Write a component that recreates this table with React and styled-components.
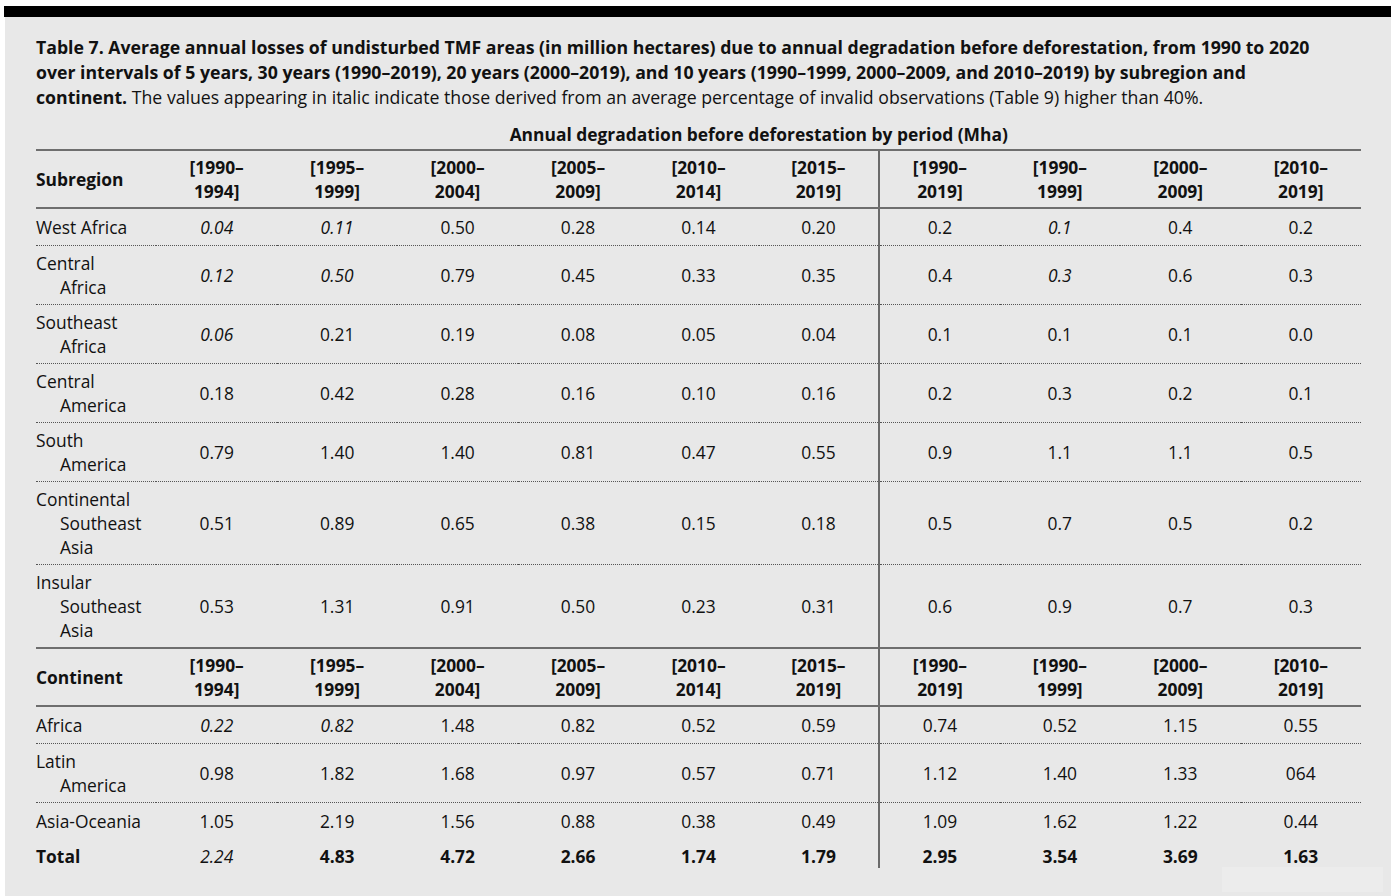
import React from "react";
import styled, { createGlobalStyle } from "styled-components";

const Global = createGlobalStyle`
  html, body { margin: 0; padding: 0; background: #ffffff; }
  body { font-family: "Open Sans", "Noto Sans", sans-serif; color: #111; }
`;

const Page = styled.div`
  padding: 6px 4px 3px 4px;
  width: 1387px;
`;

const TopBar = styled.div`
  height: 11px;
  background: #000;
`;

const Panel = styled.section`
  position: relative;
  background: #e8e8e8;
  margin-left: 1px;
  padding: 18px 30px 29px 31px;
`;

const Caption = styled.p`
  margin: 0 0 10px 0;
  font-size: 17.7px;
  line-height: 25px;
  letter-spacing: 0;
  white-space: nowrap;
`;

const CaptionBold = styled.strong`
  font-weight: 700;
`;

const Table = styled.table`
  width: 1325px;
  border-collapse: collapse;
  table-layout: fixed;
  font-size: 17.4px;
  line-height: 24px;
`;

const SpanHead = styled.th`
  font-weight: 700;
  text-align: center;
  padding: 2px 0 3px 0;
  border-bottom: 2px solid #6e6e6e;
`;

const HeadCell = styled.th`
  font-weight: 700;
  text-align: ${(p) => (p.$first ? "left" : "center")};
  vertical-align: middle;
  padding: 4px 0;
  border-bottom: 2px solid #6e6e6e;
  border-top: ${(p) => (p.$topRule ? "2px solid #6e6e6e" : "none")};
  border-left: ${(p) => (p.$divider ? "2px solid #6a6a6a" : "none")};
`;

const Cell = styled.td`
  text-align: ${(p) => (p.$first ? "left" : "center")};
  vertical-align: middle;
  padding: ${(p) => (p.$total ? "5px 0 0 0" : p.$single ? "6px 0" : "5px 0")};
  font-style: ${(p) => (p.$italic ? "italic" : "normal")};
  font-weight: ${(p) => (p.$bold ? 700 : 400)};
  border-bottom: ${(p) => (p.$dotted ? "1px dotted #555" : "none")};
  border-left: ${(p) => (p.$divider ? "2px solid #6a6a6a" : "none")};
`;

const LabelLine = styled.span`
  display: block;
  padding-left: ${(p) => (p.$indent ? "24px" : "0")};
`;

const HeadLine = styled.span`
  display: block;
`;

const Smudge = styled.div`
  position: absolute;
  right: 8px;
  bottom: 5px;
  width: 161px;
  height: 25px;
  background: #ececec;
`;

const periods = [
  ["[1990–", "1994]"],
  ["[1995–", "1999]"],
  ["[2000–", "2004]"],
  ["[2005–", "2009]"],
  ["[2010–", "2014]"],
  ["[2015–", "2019]"],
  ["[1990–", "2019]"],
  ["[1990–", "1999]"],
  ["[2000–", "2009]"],
  ["[2010–", "2019]"],
];

// "*" prefix => italic
const subregions = [
  [["West Africa"], ["*0.04", "*0.11", "0.50", "0.28", "0.14", "0.20", "0.2", "*0.1", "0.4", "0.2"]],
  [["Central", "Africa"], ["*0.12", "*0.50", "0.79", "0.45", "0.33", "0.35", "0.4", "*0.3", "0.6", "0.3"]],
  [["Southeast", "Africa"], ["*0.06", "0.21", "0.19", "0.08", "0.05", "0.04", "0.1", "0.1", "0.1", "0.0"]],
  [["Central", "America"], ["0.18", "0.42", "0.28", "0.16", "0.10", "0.16", "0.2", "0.3", "0.2", "0.1"]],
  [["South", "America"], ["0.79", "1.40", "1.40", "0.81", "0.47", "0.55", "0.9", "1.1", "1.1", "0.5"]],
  [["Continental", "Southeast", "Asia"], ["0.51", "0.89", "0.65", "0.38", "0.15", "0.18", "0.5", "0.7", "0.5", "0.2"]],
  [["Insular", "Southeast", "Asia"], ["0.53", "1.31", "0.91", "0.50", "0.23", "0.31", "0.6", "0.9", "0.7", "0.3"]],
];

const continents = [
  [["Africa"], ["*0.22", "*0.82", "1.48", "0.82", "0.52", "0.59", "0.74", "0.52", "1.15", "0.55"]],
  [["Latin", "America"], ["0.98", "1.82", "1.68", "0.97", "0.57", "0.71", "1.12", "1.40", "1.33", "064"]],
  [["Asia-Oceania"], ["1.05", "2.19", "1.56", "0.88", "0.38", "0.49", "1.09", "1.62", "1.22", "0.44"]],
];

const totals = ["*2.24", "4.83", "4.72", "2.66", "1.74", "1.79", "2.95", "3.54", "3.69", "1.63"];

function HeaderRow({ label, topRule }) {
  return (
    <tr>
      <HeadCell $first $topRule={topRule}>{label}</HeadCell>
      {periods.map((p, i) => (
        <HeadCell key={i} $divider={i === 6} $topRule={topRule}>
          <HeadLine>{p[0]}</HeadLine>
          <HeadLine>{p[1]}</HeadLine>
        </HeadCell>
      ))}
    </tr>
  );
}

function DataRow({ label, values, dotted }) {
  const single = label.length === 1;
  return (
    <tr>
      <Cell $first $dotted={dotted} $single={single}>
        {label.map((l, i) => (
          <LabelLine key={i} $indent={i > 0}>{l}</LabelLine>
        ))}
      </Cell>
      {values.map((v, i) => (
        <Cell key={i} $dotted={dotted} $single={single} $divider={i === 6} $italic={v.startsWith("*")}>
          {v.replace("*", "")}
        </Cell>
      ))}
    </tr>
  );
}

export default function App() {
  return (
    <Page>
      <Global />
      <TopBar />
      <Panel>
        <Smudge />
        <Caption>
          <CaptionBold>
            Table 7. Average annual losses of undisturbed TMF areas (in million hectares) due to annual degradation before deforestation, from 1990 to 2020
            <br />
            over intervals of 5 years, 30 years (1990–2019), 20 years (2000–2019), and 10 years (1990–1999, 2000–2009, and 2010–2019) by subregion and
            <br />
            continent.
          </CaptionBold>{" "}
          The values appearing in italic indicate those derived from an average percentage of invalid observations (Table 9) higher than 40%.
        </Caption>
        <Table>
          <thead>
            <tr>
              <th />
              <SpanHead colSpan={10}>Annual degradation before deforestation by period (Mha)</SpanHead>
            </tr>
            <HeaderRow label="Subregion" topRule />
          </thead>
          <tbody>
            {subregions.map(([label, values], i) => (
              <DataRow key={i} label={label} values={values} dotted={i < subregions.length - 1} />
            ))}
            <HeaderRow label="Continent" topRule />
            {continents.map(([label, values], i) => (
              <DataRow key={i} label={label} values={values} dotted={i < continents.length - 1} />
            ))}
            <tr>
              <Cell $first $bold $total>Total</Cell>
              {totals.map((v, i) => (
                <Cell key={i} $total $divider={i === 6} $italic={v.startsWith("*")} $bold={!v.startsWith("*")}>
                  {v.replace("*", "")}
                </Cell>
              ))}
            </tr>
          </tbody>
        </Table>
      </Panel>
    </Page>
  );
}
